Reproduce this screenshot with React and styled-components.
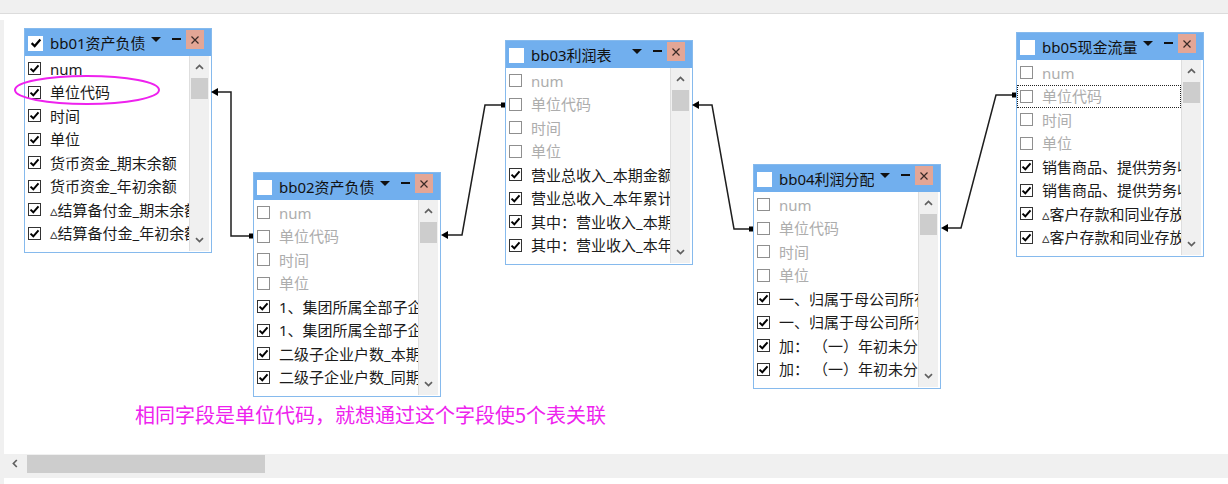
import React from 'react';
import styled, { createGlobalStyle, css } from 'styled-components';

const GlobalStyle = createGlobalStyle`
  html, body { margin: 0; padding: 0; background: #fff; }
  body { font-family: "Noto Sans", "Noto Sans CJK SC", "DejaVu Sans", sans-serif; }
  #root { width: 1228px; height: 484px; overflow: hidden; }
`;

const Page = styled.div`
  width: 1228px;
  height: 484px;
  display: flex;
  flex-direction: column;
  background: #fff;
`;

const TopStrip = styled.div`
  flex: none;
  height: 13px;
  background: #f0f0f0;
  border-bottom: 1px solid #dcdcdc;
`;

const Viewport = styled.div`
  flex: none;
  margin-top: 6px;
  height: 434px;
  display: flex;
`;

const Gutter = styled.div`
  flex: none;
  width: 4px;
  background: #f0f0f0;
`;

const Canvas = styled.div`
  position: relative;
  flex: 1;
  background: #fff;
  overflow: hidden;
`;

const HScroll = styled.div`
  flex: none;
  height: 24px;
  background: #f0f0f0;
  display: flex;
  align-items: flex-start;
`;

const HArrow = styled.div`
  width: 27px;
  height: 19px;
  display: flex;
  align-items: center;
  justify-content: center;
  padding-left: 2px;
  box-sizing: border-box;
`;

const HThumb = styled.div`
  margin-top: 1px;
  width: 238px;
  height: 18px;
  background: #cdcdcd;
`;

const BottomStrip = styled.div`
  flex: 1;
  display: flex;
`;

/* ---------- table window ---------- */

const Win = styled.div`
  position: absolute;
  box-sizing: border-box;
  width: 188px;
  height: 225px;
  border: 1px solid #86baed;
  background: #fff;
  display: flex;
  flex-direction: column;
  z-index: 1;
`;

const TitleBar = styled.div`
  flex: none;
  height: 27px;
  background: #71afee;
  display: flex;
  align-items: center;
`;

const TitleCheck = styled.span`
  flex: none;
  width: 15px;
  height: 15px;
  margin: 1px 0 0 3px;
  background: #fff;
  display: flex;
  align-items: center;
  justify-content: center;
`;

const TitleText = styled.span`
  flex: none;
  width: 95px;
  margin-left: 7px;
  font-size: 15px;
  line-height: 20px;
  color: #111;
  white-space: nowrap;
  overflow: hidden;
`;

const Controls = styled.div`
  align-self: flex-start;
  display: flex;
  align-items: center;
  height: 20px;
  margin-left: auto;
  margin-right: 7px;
`;

const CtrlBox = styled.span`
  width: 20px;
  height: 20px;
  display: flex;
  align-items: center;
  justify-content: center;
`;

const DropTri = styled.span`
  width: 0;
  height: 0;
  border-left: 5px solid transparent;
  border-right: 5px solid transparent;
  border-top: 5px solid #111;
`;

const MinusBar = styled.span`
  width: 9px;
  height: 2px;
  background: #111;
`;

const CloseBtn = styled.span`
  width: 18px;
  height: 19px;
  margin-top: 1px;
  background: #e3a696;
  display: flex;
  align-items: center;
  justify-content: center;
`;

const Body = styled.div`
  flex: 1;
  min-height: 0;
  display: flex;
  padding: 0 2px 1px 0;
`;

const List = styled.div`
  flex: 1;
  min-width: 0;
  overflow: hidden;
  padding-top: 1px;
`;

const Row = styled.div`
  height: 23.5px;
  display: flex;
  align-items: center;
  padding-left: 3px;
  box-sizing: border-box;
  white-space: nowrap;
  ${(p) =>
    p.$focused &&
    css`
      outline: 1px dotted #222;
      outline-offset: -1px;
    `}
`;

const Box = styled.span`
  flex: none;
  box-sizing: border-box;
  width: 13px;
  height: 13px;
  border: 1px solid ${(p) => (p.$checked ? '#333' : '#8f8f8f')};
  background: #fff;
  display: flex;
  align-items: center;
  justify-content: center;
`;

const Label = styled.span`
  margin-left: 9px;
  font-size: 15px;
  line-height: 20px;
  color: ${(p) => (p.$checked ? '#1b1b1b' : '#adadad')};
`;

const VScroll = styled.div`
  flex: none;
  width: 19px;
  border-left: 1px solid #dedede;
  background: #f0f0f0;
  display: flex;
  flex-direction: column;
`;

const VArrow = styled.div`
  flex: none;
  height: 22px;
  display: flex;
  align-items: center;
  justify-content: center;
`;

const VThumb = styled.div`
  flex: none;
  height: 21px;
  margin: 0 1px;
  background: #cdcdcd;
`;

const VTrack = styled.div`
  flex: 1;
`;

/* ---------- overlay ---------- */

const Overlay = styled.svg`
  position: absolute;
  left: 0;
  top: 0;
  width: 100%;
  height: 100%;
  pointer-events: none;
  z-index: 2;
  overflow: visible;
`;

const Note = styled.div`
  position: absolute;
  font-family: "Noto Sans CJK SC", sans-serif;
  font-size: 20px;
  line-height: 22px;
  color: #ee22ee;
  white-space: nowrap;
`;

const CheckMark = ({ size = 11 }) => (
  <svg width={size} height={size} viewBox="0 0 11 11">
    <path d="M1.5 5.6 L4.3 8.3 L9.5 2.3" fill="none" stroke="#000" strokeWidth="2" />
  </svg>
);

const Chevron = ({ down }) => (
  <svg width="9" height="6" viewBox="0 0 9 6">
    <polyline
      points={down ? '1,1.2 4.5,4.6 8,1.2' : '1,4.8 4.5,1.4 8,4.8'}
      fill="none"
      stroke="#606060"
      strokeWidth="1.7"
    />
  </svg>
);

const CloseIcon = () => (
  <svg width="8" height="8" viewBox="0 0 8 8">
    <path d="M0.5 0.5 L7.5 7.5 M7.5 0.5 L0.5 7.5" stroke="#3a2a26" strokeWidth="1.2" />
  </svg>
);

const base = (on) => [
  ['num', on],
  ['单位代码', on],
  ['时间', on],
  ['单位', on],
];

const tables = [
  {
    id: 'bb01',
    title: 'bb01资产负债表',
    x: 24,
    y: 28,
    checked: true,
    rows: [
      ...base(true),
      ['货币资金_期末余额', true],
      ['货币资金_年初余额', true],
      ['▵结算备付金_期末余额', true],
      ['▵结算备付金_年初余额', true],
    ],
  },
  {
    id: 'bb02',
    title: 'bb02资产负债表（续）',
    x: 253,
    y: 172,
    rows: [
      ...base(false),
      ['1、集团所属全部子企业户数_本期', true],
      ['1、集团所属全部子企业户数_同期', true],
      ['二级子企业户数_本期', true],
      ['二级子企业户数_同期', true],
    ],
  },
  {
    id: 'bb03',
    title: 'bb03利润表',
    x: 505,
    y: 40,
    rows: [
      ...base(false),
      ['营业总收入_本期金额', true],
      ['营业总收入_本年累计', true],
      ['其中：营业收入_本期金额', true],
      ['其中：营业收入_本年累计', true],
    ],
  },
  {
    id: 'bb04',
    title: 'bb04利润分配表',
    x: 753,
    y: 164,
    rows: [
      ...base(false),
      ['一、归属于母公司所有者的净利润_本期', true],
      ['一、归属于母公司所有者的净利润_本年', true],
      ['加： （一）年初未分配利润_本期', true],
      ['加： （一）年初未分配利润_本年', true],
    ],
  },
  {
    id: 'bb05',
    title: 'bb05现金流量表',
    x: 1016,
    y: 32,
    focusRow: 1,
    rows: [
      ...base(false),
      ['销售商品、提供劳务收到的现金_本期', true],
      ['销售商品、提供劳务收到的现金_本年', true],
      ['▵客户存款和同业存放款项净增加额_本期', true],
      ['▵客户存款和同业存放款项净增加额_本年', true],
    ],
  },
];

// canvas origin in page coordinates
const OX = 4;
const OY = 20;

const links = [
  { from: [253, 236], pts: [[231, 236], [231, 92]], to: [211, 92] },
  { from: [505, 105], pts: [[485, 105], [462, 235]], to: [441, 235] },
  { from: [753, 229], pts: [[734, 229], [712, 105]], to: [692, 105] },
  { from: [1016, 95], pts: [[996, 95], [961, 228]], to: [941, 228] },
];

const TableWindow = ({ t }) => (
  <Win style={{ left: t.x - OX, top: t.y - OY }}>
    <TitleBar>
      <TitleCheck>{t.checked && <CheckMark size={12} />}</TitleCheck>
      <TitleText>{t.title}</TitleText>
      <Controls>
        <CtrlBox>
          <DropTri />
        </CtrlBox>
        <CtrlBox>
          <MinusBar />
        </CtrlBox>
        <CloseBtn>
          <CloseIcon />
        </CloseBtn>
      </Controls>
    </TitleBar>
    <Body>
      <List>
        {t.rows.map(([label, on], i) => (
          <Row key={i} $focused={t.focusRow === i}>
            <Box $checked={on}>{on && <CheckMark />}</Box>
            <Label $checked={on}>{label}</Label>
          </Row>
        ))}
      </List>
      <VScroll>
        <VArrow>
          <Chevron />
        </VArrow>
        <VThumb />
        <VTrack />
        <VArrow>
          <Chevron down />
        </VArrow>
      </VScroll>
    </Body>
  </Win>
);

export default function App() {
  return (
    <>
      <GlobalStyle />
      <Page>
        <TopStrip />
        <Viewport>
          <Gutter />
          <Canvas>
            {tables.map((t) => (
              <TableWindow key={t.id} t={t} />
            ))}
            <Overlay>
              <g transform={`translate(${-OX} ${-OY})`}>
                {links.map((l, i) => {
                  const all = [l.from, ...l.pts, [l.to[0] + 6, l.to[1]]];
                  const [tx, ty] = l.to;
                  return (
                    <g key={i}>
                      <polyline
                        points={all.map((p) => p.join(',')).join(' ')}
                        fill="none"
                        stroke="#1e1e1e"
                        strokeWidth="1.5"
                      />
                      <rect x={l.from[0] - 4} y={l.from[1] - 2.5} width="4" height="5" fill="#000" />
                      <polygon
                        points={`${tx},${ty} ${tx + 7},${ty - 4} ${tx + 7},${ty + 4}`}
                        fill="#000"
                      />
                    </g>
                  );
                })}
                <ellipse cx="87" cy="90" rx="72" ry="14" fill="none" stroke="#ee22ee" strokeWidth="2" />
              </g>
            </Overlay>
            <Note style={{ left: 135 - OX, top: 404 - OY }}>
              相同字段是单位代码，就想通过这个字段使5个表关联
            </Note>
          </Canvas>
        </Viewport>
        <HScroll>
          <HArrow>
            <svg width="6" height="9" viewBox="0 0 6 9">
              <polyline points="4.8,1 1.4,4.5 4.8,8" fill="none" stroke="#606060" strokeWidth="1.7" />
            </svg>
          </HArrow>
          <HThumb />
        </HScroll>
        <BottomStrip>
          <Gutter />
        </BottomStrip>
      </Page>
    </>
  );
}
